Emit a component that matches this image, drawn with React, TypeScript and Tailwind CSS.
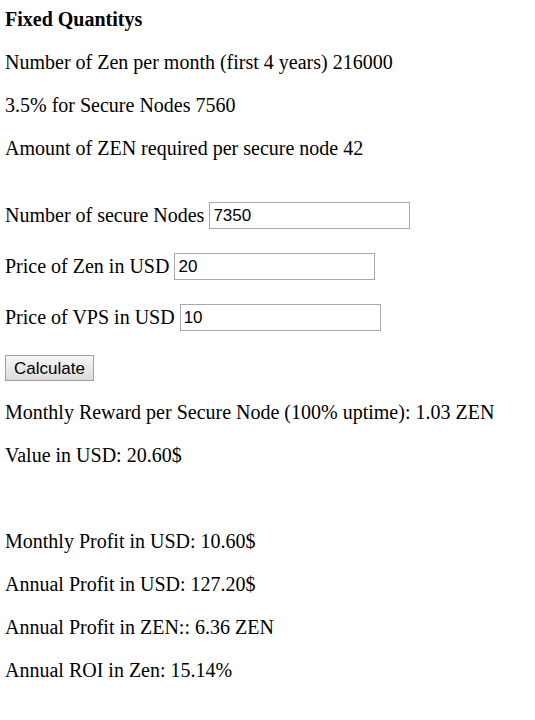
import { useState } from 'react'

function Line({ children, className = '' }: { children: React.ReactNode; className?: string }) {
  return <p className={`leading-[23px] ${className}`}>{children}</p>
}

function Field({ label, value, onChange }: { label: string; value: string; onChange: (v: string) => void }) {
  return (
    <div className="flex items-center h-[27px]">
      <span className="leading-[23px]">{label}</span>
      <input
        value={value}
        onChange={(e) => onChange(e.target.value)}
        className="ml-[5px] w-[201px] h-[27px] border border-[#a9a9a9] bg-white px-[3px] text-[17px] text-black outline-none font-['Liberation_Sans',Arial,sans-serif]"
      />
    </div>
  )
}

export default function App() {
  const [nodes, setNodes] = useState('7350')
  const [price, setPrice] = useState('20')
  const [vps, setVps] = useState('10')

  return (
    <div className="min-h-[720px] bg-white text-black pl-[5px] pt-[8px] text-[20px] font-['Liberation_Serif','Times_New_Roman',serif]">
      <Line className="font-bold">Fixed Quantitys</Line>
      <Line className="mt-[20px]">Number of Zen per month (first 4 years) 216000</Line>
      <Line className="mt-[20px]">3.5% for Secure Nodes 7560</Line>
      <Line className="mt-[20px]">Amount of ZEN required per secure node 42</Line>

      <div className="mt-[42px] flex flex-col gap-[24px]">
        <Field label="Number of secure Nodes" value={nodes} onChange={setNodes} />
        <Field label="Price of Zen in USD" value={price} onChange={setPrice} />
        <Field label="Price of VPS in USD" value={vps} onChange={setVps} />
        <div className="flex">
          <button className="h-[26px] w-[89px] border border-[#a0a0a0] bg-gradient-to-b from-[#f6f6f6] to-[#dddddd] text-[17px] leading-none text-black font-['Liberation_Sans',Arial,sans-serif]">
            Calculate
          </button>
        </div>
      </div>

      <Line className="mt-[20px]">Monthly Reward per Secure Node (100% uptime): 1.03 ZEN</Line>
      <Line className="mt-[20px]">Value in USD: 20.60$</Line>
      <Line className="mt-[63px]">Monthly Profit in USD: 10.60$</Line>
      <Line className="mt-[20px]">Annual Profit in USD: 127.20$</Line>
      <Line className="mt-[20px]">Annual Profit in ZEN:: 6.36 ZEN</Line>
      <Line className="mt-[20px]">Annual ROI in Zen: 15.14%</Line>
    </div>
  )
}
